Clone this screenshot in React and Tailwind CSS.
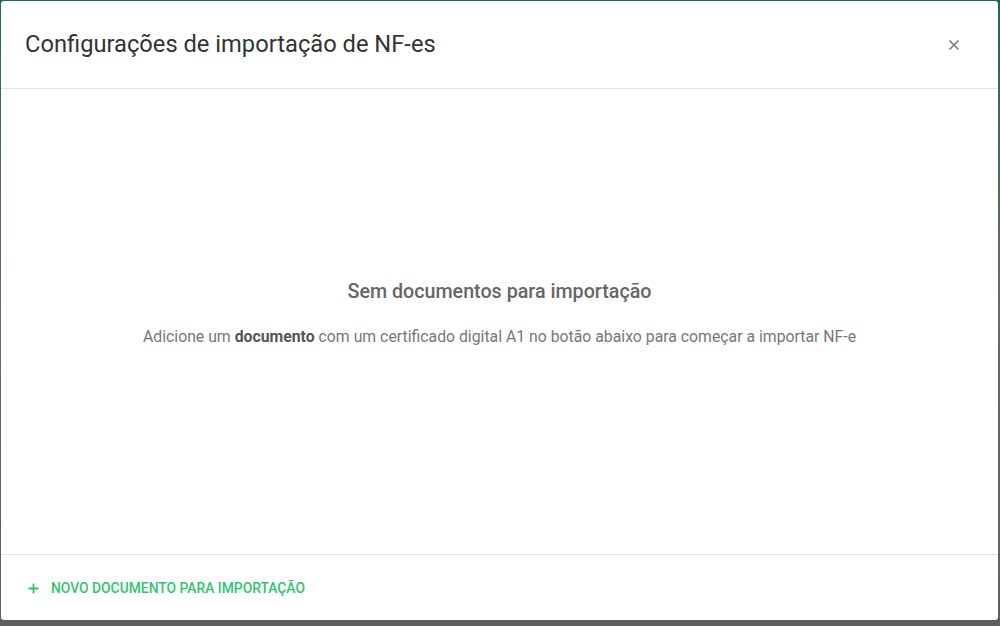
export default function App() {
    return (
        <div
            className="w-[1000px] h-[626px] pl-px pr-[2px] pt-px pb-[6px] bg-gradient-to-b from-[#1d6a45] via-[#6a6a6a] to-[#5e5e5e] overflow-hidden"
            style={{ fontFamily: 'Roboto, "Noto Sans", sans-serif' }}
        >
            <div className="h-full bg-white rounded-[3px] flex flex-col">
                {/* Header */}
                <div className="h-[88px] shrink-0 flex items-center justify-between pl-6 pr-[38px] border-b border-[#e3e3e3]">
                    <h1 className="text-[23.7px] text-[#333333] leading-none">
                        Configurações de importação de NF-es
                    </h1>
                    <button className="text-[#7a7a7a]">
                        <svg width="12" height="12" viewBox="0 0 12 12" fill="none" stroke="currentColor" strokeWidth="1.6">
                            <path d="M1.5 1.5l9 9M10.5 1.5l-9 9" />
                        </svg>
                    </button>
                </div>

                {/* Empty state */}
                <div className="flex-1 flex flex-col items-center justify-center pb-[16px]">
                    <h2 className="text-[19.7px] font-medium text-[#666666] leading-none">
                        Sem documentos para importação
                    </h2>
                    <p className="mt-[28px] text-[15.8px] text-[#777777] leading-none">
                        Adicione um <span className="font-bold text-[#555555]">documento</span> com um certificado digital A1 no botão abaixo para começar a importar NF-e
                    </p>
                </div>

                {/* Footer */}
                <div className="h-[66px] shrink-0 flex items-center px-[27px] border-t border-[#e3e3e3]">
                    <button className="flex items-center gap-3 text-[#33c36f] text-[13.85px] font-medium uppercase pt-[2px]">
                        <svg width="11" height="11" viewBox="0 0 11 11" fill="none" stroke="currentColor" strokeWidth="1.8">
                            <path d="M5.5 0.5v10M0.5 5.5h10" />
                        </svg>
                        Novo documento para importação
                    </button>
                </div>
            </div>
        </div>
    );
}
